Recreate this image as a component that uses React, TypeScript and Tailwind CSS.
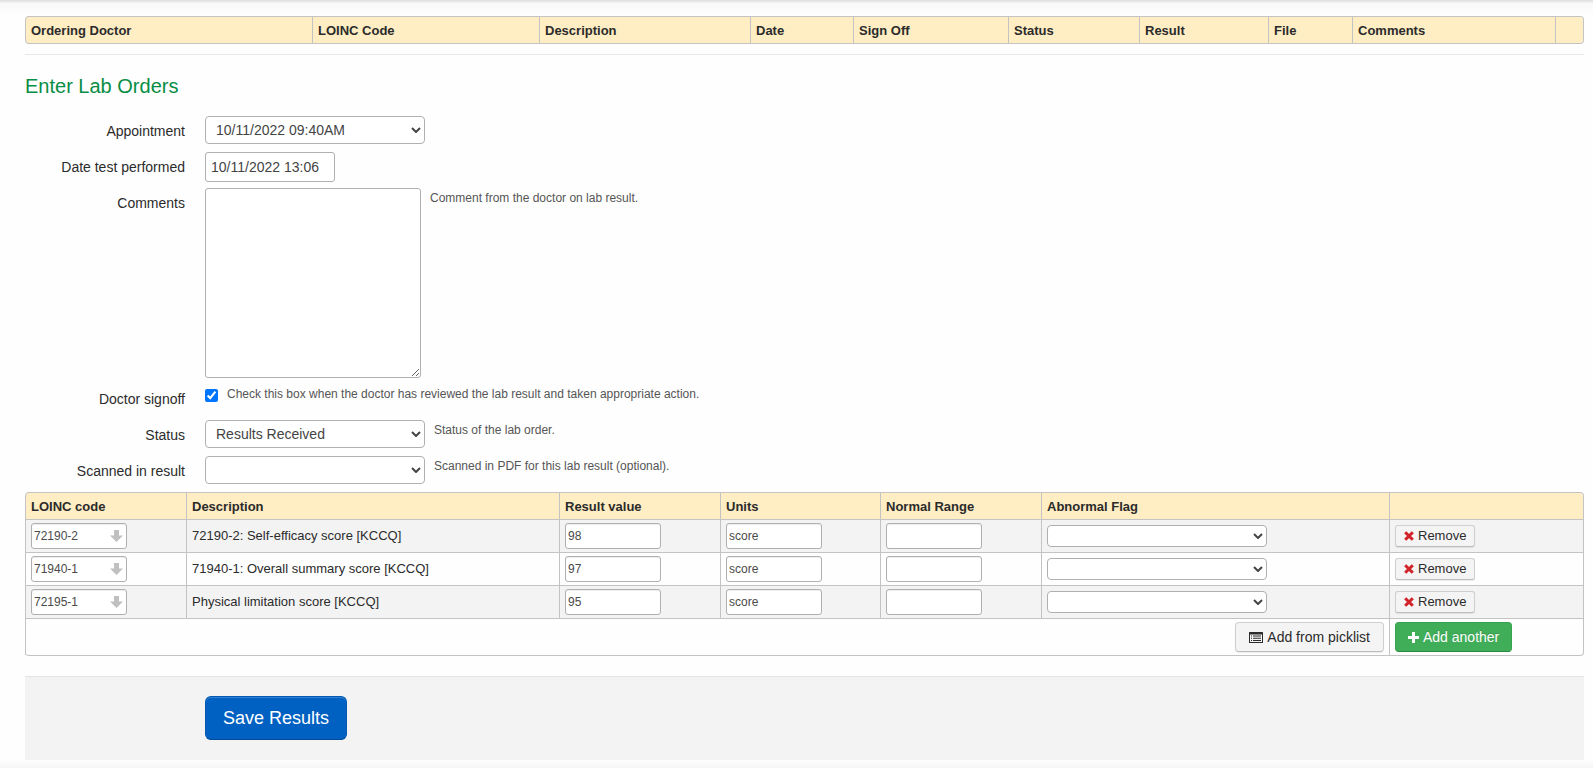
import { useState } from 'react';
import type { ReactNode } from 'react';

interface ResultRow {
  code: string;
  description: string;
  value: string;
  units: string;
}

const ORDER_COLUMNS = [
  { label: 'Ordering Doctor', width: 'w-[287px]' },
  { label: 'LOINC Code', width: 'w-[227px]' },
  { label: 'Description', width: 'w-[211px]' },
  { label: 'Date', width: 'w-[103px]' },
  { label: 'Sign Off', width: 'w-[155px]' },
  { label: 'Status', width: 'w-[131px]' },
  { label: 'Result', width: 'w-[129px]' },
  { label: 'File', width: 'w-[84px]' },
  { label: 'Comments', width: 'w-[203px]' },
  { label: '', width: 'w-auto' },
];

const RESULT_COLUMNS = [
  { label: 'LOINC code', width: 'w-[161px]' },
  { label: 'Description', width: 'w-[373px]' },
  { label: 'Result value', width: 'w-[161px]' },
  { label: 'Units', width: 'w-[160px]' },
  { label: 'Normal Range', width: 'w-[161px]' },
  { label: 'Abnormal Flag', width: 'w-[348px]' },
  { label: '', width: 'w-auto' },
];

const INITIAL_ROWS: ResultRow[] = [
  { code: '72190-2', description: '72190-2: Self-efficacy score [KCCQ]', value: '98', units: 'score' },
  { code: '71940-1', description: '71940-1: Overall summary score [KCCQ]', value: '97', units: 'score' },
  { code: '72195-1', description: 'Physical limitation score [KCCQ]', value: '95', units: 'score' },
];

const TABLE =
  'w-full table-fixed border-separate border-spacing-0 rounded border border-l-0 border-[#c3c3c3] text-[13px] leading-5';
const HEAD_CELL =
  'h-[26px] border-l border-[#c3c3c3] bg-[#ffedc3] px-[5px] pt-[2px] text-left font-bold first:rounded-l last:rounded-r';
const RESULT_HEAD_CELL =
  'h-[26px] border-l border-[#c3c3c3] bg-[#ffedc3] px-[5px] pt-[2px] text-left font-bold first:rounded-tl last:rounded-tr';
const CELL = 'h-[33px] border-t border-l border-[#c3c3c3] px-[5px] py-0';
const CELL_INPUT =
  'block h-[26px] w-24 rounded-[3px] border border-[#b0b0b0] bg-white px-[2px] text-xs text-[#4a4a4a] shadow-[inset_0_1px_1px_rgba(0,0,0,0.075)]';

function Chevron() {
  return (
    <svg
      className="pointer-events-none absolute top-1/2 right-1 h-[6px] w-[10px] -translate-y-1/2"
      viewBox="0 0 10 6"
      fill="none"
      stroke="#444"
      strokeWidth="2"
    >
      <path d="M1 1l4 4 4-4" />
    </svg>
  );
}

function ArrowDown() {
  return (
    <svg
      className="pointer-events-none absolute top-[7px] right-1 h-3 w-[13px]"
      viewBox="0 0 13 12"
      fill="#c0c0c0"
    >
      <path d="M4 0h5v5.500h4L6.500 12 0 5.500h4z" />
    </svg>
  );
}

function RemoveIcon() {
  return (
    <svg className="h-[10px] w-[10px]" viewBox="0 0 10 10" stroke="#d2232a" strokeWidth="3">
      <path d="M1.200 1.200l7.600 7.600M8.800 1.200l-7.600 7.600" />
    </svg>
  );
}

function ListIcon() {
  return (
    <svg className="h-[11px] w-[14px]" viewBox="0 0 14 11">
      <path
        fill="#2b2b2b"
        fillRule="evenodd"
        d="M.500 0h13a.500.500 0 0 1 .500.500v10a.500.500 0 0 1-.500.500H.500a.500.500 0 0 1-.500-.500V.500A.500.500 0 0 1 .500 0zM1 2.500V10h12V2.500z"
      />
      <path fill="#2b2b2b" d="M2 3.500h1v1H2zM4 3.500h8v1H4zM2 5.700h1v1H2zM4 5.700h8v1H4zM2 7.900h1v1H2zM4 7.900h8v1H4z" />
    </svg>
  );
}

function PlusIcon() {
  return (
    <svg className="h-[11px] w-[11px]" viewBox="0 0 11 11" stroke="#fff" strokeWidth="3">
      <path d="M5.500 0v11M0 5.500h11" />
    </svg>
  );
}

function Field({
  label,
  htmlFor,
  help,
  children,
}: {
  label: string;
  htmlFor: string;
  help?: string;
  children: ReactNode;
}) {
  return (
    <div className="mb-[6px] flex min-h-[30px] items-start">
      <label htmlFor={htmlFor} className="mr-5 w-40 pt-[5px] text-right">
        {label}
      </label>
      {children}
      {help && <span className="ml-[9px] text-xs leading-5 text-[#555]">{help}</span>}
    </div>
  );
}

function FormSelect({ id, options }: { id: string; options: string[] }) {
  return (
    <div className="relative w-[220px]">
      <select
        id={id}
        className="block h-7 w-full appearance-none rounded border border-[#b0b0b0] bg-white pr-6 pl-[10px] text-sm text-[#444]"
      >
        {options.map((option) => (
          <option key={option}>{option}</option>
        ))}
      </select>
      <Chevron />
    </div>
  );
}

export default function App() {
  const [rows, setRows] = useState<ResultRow[]>(INITIAL_ROWS);

  const addRow = () => setRows([...rows, { code: '', description: '', value: '', units: '' }]);
  const removeRow = (index: number) => setRows(rows.filter((_, i) => i !== index));

  return (
    <div className="min-h-screen bg-[#fefefe] font-['Liberation_Sans',Arial,sans-serif] text-sm leading-5 text-[#2b2b2b]">
      <div className="h-4 bg-linear-to-b from-[#dcdcdc] via-[#f8f8f8] via-20% to-[#fefefe]" />

      <main className="mr-[9px] ml-[25px]">
        <table className={TABLE}>
          <thead>
            <tr>
              {ORDER_COLUMNS.map((column) => (
                <th key={column.label} className={`${HEAD_CELL} ${column.width}`}>
                  {column.label}
                </th>
              ))}
            </tr>
          </thead>
        </table>

        <hr className="mt-[10px] border-[#e8e8e8]" />

        <h2 className="mt-4 mb-[15px] text-xl leading-[30px] text-[#078d45]">Enter Lab Orders</h2>

        <form onSubmit={(e) => e.preventDefault()}>
          <Field label="Appointment" htmlFor="appointment">
            <FormSelect id="appointment" options={['10/11/2022 09:40AM']} />
          </Field>
          <Field label="Date test performed" htmlFor="performed">
            <input
              id="performed"
              type="text"
              defaultValue="10/11/2022 13:06"
              className="h-[30px] w-[130px] rounded-[3px] border border-[#b0b0b0] bg-white px-[5px] text-sm text-[#444]"
            />
          </Field>
          <Field label="Comments" htmlFor="comments" help="Comment from the doctor on lab result.">
            <textarea
              id="comments"
              className="block h-[190px] w-[216px] rounded-[3px] border border-[#b0b0b0] bg-white p-1 text-[#444]"
            />
          </Field>
          <Field
            label="Doctor signoff"
            htmlFor="signoff"
            help="Check this box when the doctor has reviewed the lab result and taken appropriate action."
          >
            <input id="signoff" type="checkbox" defaultChecked className="mt-[5px] h-[13px] w-[13px] accent-[#0075ff]" />
          </Field>
          <Field label="Status" htmlFor="status" help="Status of the lab order.">
            <FormSelect id="status" options={['Results Received']} />
          </Field>
          <Field label="Scanned in result" htmlFor="scanned" help="Scanned in PDF for this lab result (optional).">
            <FormSelect id="scanned" options={['']} />
          </Field>

          <table className={TABLE}>
            <thead>
              <tr>
                {RESULT_COLUMNS.map((column) => (
                  <th key={column.label} className={`${RESULT_HEAD_CELL} ${column.width}`}>
                    {column.label}
                  </th>
                ))}
              </tr>
            </thead>
            <tbody>
              {rows.map((row, index) => (
                <tr key={index} className="odd:bg-[#f3f3f3]">
                  <td className={CELL}>
                    <div className="relative w-24">
                      <input aria-label="LOINC code" defaultValue={row.code} className={CELL_INPUT} />
                      <ArrowDown />
                    </div>
                  </td>
                  <td className={CELL}>{row.description}</td>
                  <td className={CELL}>
                    <input aria-label="Result value" defaultValue={row.value} className={CELL_INPUT} />
                  </td>
                  <td className={CELL}>
                    <input aria-label="Units" defaultValue={row.units} className={CELL_INPUT} />
                  </td>
                  <td className={CELL}>
                    <input aria-label="Normal range" className={CELL_INPUT} />
                  </td>
                  <td className={CELL}>
                    <div className="relative w-[220px]">
                      <select
                        aria-label="Abnormal flag"
                        className="block h-[22px] w-full appearance-none rounded border border-[#b0b0b0] bg-white"
                      >
                        <option></option>
                      </select>
                      <Chevron />
                    </div>
                  </td>
                  <td className={CELL}>
                    <button
                      type="button"
                      onClick={() => removeRow(index)}
                      className="flex h-[22px] items-center gap-1 rounded-[3px] border border-[#cfcfcf] border-b-[#bdbdbd] bg-[#f4f4f4] px-2 text-[13px] shadow-[0_1px_1px_rgba(0,0,0,0.08)]"
                    >
                      <RemoveIcon />
                      Remove
                    </button>
                  </td>
                </tr>
              ))}
              <tr>
                <td colSpan={6} className="h-[37px] border-t border-l border-[#c3c3c3] px-[5px]">
                  <button
                    type="button"
                    className="ml-auto flex h-[30px] items-center gap-1 rounded border border-[#cfcfcf] border-b-[#bdbdbd] bg-[#f4f4f4] px-[13px] text-sm shadow-[0_1px_1px_rgba(0,0,0,0.08)]"
                  >
                    <ListIcon />
                    Add from picklist
                  </button>
                </td>
                <td className="h-[37px] border-t border-l border-[#c3c3c3] px-[5px]">
                  <button
                    type="button"
                    onClick={addRow}
                    className="flex h-[30px] items-center gap-1 rounded border border-[#37a34e] border-b-[#2b8a3f] bg-[#40ae58] px-3 text-sm text-white [text-shadow:0_-1px_0_rgba(0,0,0,0.15)]"
                  >
                    <PlusIcon />
                    Add another
                  </button>
                </td>
              </tr>
            </tbody>
          </table>

          <div className="mt-5 border-t border-[#e3e3e3] bg-[#f3f3f3] pt-[19px] pb-5 pl-[180px]">
            <button
              type="submit"
              className="h-11 rounded-md border border-[#0059b3] border-b-[#004a96] bg-[#0061c2] px-[17px] text-lg text-white shadow-[inset_0_1px_0_rgba(255,255,255,0.2)]"
            >
              Save Results
            </button>
          </div>
        </form>
      </main>

      <div className="h-2 bg-linear-to-b from-[#fefefe] to-[#f5f5f5]" />
    </div>
  );
}
